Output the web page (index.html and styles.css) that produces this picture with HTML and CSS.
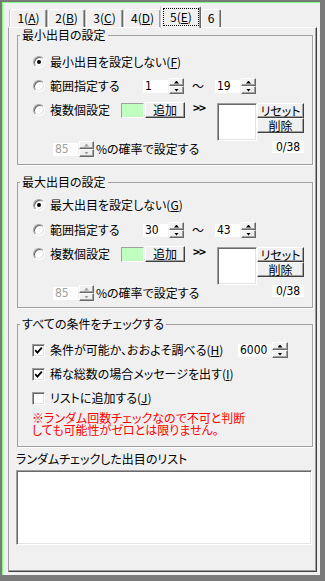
FILE: index.html
```html
<!DOCTYPE html>
<html lang="ja">
<head>
<meta charset="utf-8">
<title>設定</title>
<link rel="stylesheet" href="styles.css">
</head>
<body>
<div class="window">
  <div class="tabs">
    <div class="tab">1(<u>A</u>)</div>
    <div class="tab">2(<u>B</u>)</div>
    <div class="tab">3(<u>C</u>)</div>
    <div class="tab">4(<u>D</u>)</div>
    <div class="tab active"><span class="focus">5(<u>E</u>)</span></div>
    <div class="tab narrow">6</div>
  </div>
  <div class="panel">
    <fieldset class="group g1">
      <legend>最小出目の設定</legend>
      <div class="gbody">
        <div class="row">
          <div class="opt"><span class="radio on"></span><span>最小出目を設定しない(<u>F</u>)</span></div>
        </div>
        <div class="row range">
          <div class="opt w-range"><span class="radio"></span><span>範囲指定する</span></div>
          <div class="spin"><span class="field">1</span><span class="arrows"><span class="ab"><i class="up"></i></span><span class="ab"><i class="dn"></i></span></span></div>
          <span class="tilde">～</span>
          <div class="spin"><span class="field">19</span><span class="arrows"><span class="ab"><i class="up"></i></span><span class="ab"><i class="dn"></i></span></span></div>
        </div>
        <div class="multi">
          <div class="optline">
            <div class="opt w-multi"><span class="radio"></span><span>複数個設定</span></div>
            <span class="swatch"></span>
            <span class="btn add">追加</span>
            <span class="chev">&gt;&gt;</span>
          </div>
          <div class="minilist"></div>
          <div class="btncol">
            <span class="btn">リセット</span>
            <span class="btn">削除</span>
          </div>
          <div class="prob">
            <div class="spin disabled"><span class="field">85</span><span class="arrows"><span class="ab"><i class="up"></i></span><span class="ab"><i class="dn"></i></span></span></div>
            <span>%の確率で設定する</span>
          </div>
          <span class="count">0/38</span>
        </div>
      </div>
    </fieldset>

    <fieldset class="group g2">
      <legend>最大出目の設定</legend>
      <div class="gbody">
        <div class="row">
          <div class="opt"><span class="radio on"></span><span>最大出目を設定しない(<u>G</u>)</span></div>
        </div>
        <div class="row range">
          <div class="opt w-range"><span class="radio"></span><span>範囲指定する</span></div>
          <div class="spin"><span class="field">30</span><span class="arrows"><span class="ab"><i class="up"></i></span><span class="ab"><i class="dn"></i></span></span></div>
          <span class="tilde">～</span>
          <div class="spin"><span class="field">43</span><span class="arrows"><span class="ab"><i class="up"></i></span><span class="ab"><i class="dn"></i></span></span></div>
        </div>
        <div class="multi">
          <div class="optline">
            <div class="opt w-multi"><span class="radio"></span><span>複数個設定</span></div>
            <span class="swatch"></span>
            <span class="btn add">追加</span>
            <span class="chev">&gt;&gt;</span>
          </div>
          <div class="minilist"></div>
          <div class="btncol">
            <span class="btn">リセット</span>
            <span class="btn">削除</span>
          </div>
          <div class="prob">
            <div class="spin disabled"><span class="field">85</span><span class="arrows"><span class="ab"><i class="up"></i></span><span class="ab"><i class="dn"></i></span></span></div>
            <span>%の確率で設定する</span>
          </div>
          <span class="count">0/38</span>
        </div>
      </div>
    </fieldset>

    <fieldset class="group g3">
      <legend>すべての条件をチェックする</legend>
      <div class="gbody">
        <div class="row">
          <div class="opt w-check"><span class="check"><svg width="9" height="9" viewBox="0 0 9 9"><polyline points="1.2,4.2 3.4,6.6 7.8,1.6" fill="none" stroke="#000" stroke-width="1.8"/></svg></span><span>条件が可能か、おおよそ調べる(<u>H</u>)</span></div>
          <div class="spin wide"><span class="field">6000</span><span class="arrows"><span class="ab"><i class="up"></i></span><span class="ab"><i class="dn"></i></span></span></div>
        </div>
        <div class="row gap8">
          <div class="opt"><span class="check"><svg width="9" height="9" viewBox="0 0 9 9"><polyline points="1.2,4.2 3.4,6.6 7.8,1.6" fill="none" stroke="#000" stroke-width="1.8"/></svg></span><span>稀な総数の場合メッセージを出す(<u>I</u>)</span></div>
        </div>
        <div class="row gap8">
          <div class="opt"><span class="check"></span><span>リストに追加する(<u>J</u>)</span></div>
        </div>
        <p class="note"><span class="nl">※ランダム回数チェックなので不可と判断</span><span class="nl">しても可能性がゼロとは限りません。</span></p>
      </div>
    </fieldset>

    <div class="listlabel">ランダムチェックした出目のリスト</div>
    <div class="biglist"></div>
  </div>
</div>
</body>
</html>
```

FILE: styles.css
```css
* { box-sizing: border-box; }
html, body { margin: 0; padding: 0; }
body {
  width: 325px;
  height: 581px;
  overflow: hidden;
  background: #7a7a7a;
  font-family: "Noto Sans CJK JP", sans-serif;
  font-size: 12px;
  line-height: 14px;
  color: #000;
  font-feature-settings: "palt" 1;
}
u { text-decoration: underline; text-underline-offset: 1px; }

.window {
  margin: 2px 0 0 2px;
  width: 318px;
  height: 573px;
  border-top: 1px solid #80ff80;
  border-left: 1px solid #80ff80;
  background: #f0f0f0;
  padding: 3px 0 0 5px;
}

/* tabs */
.tabs {
  display: flex;
  align-items: flex-end;
  height: 21px;
  padding-left: 2px;
}
.tab {
  width: 37px;
  height: 18px;
  margin-right: 1px;
  border: 1px solid #fff;
  border-bottom: 0;
  border-right-color: #696969;
  box-shadow: inset -1px 0 #a0a0a0, -1px 0 #c8c8c8;
  border-radius: 2px 2px 0 0;
  text-align: center;
  line-height: 16px;
  background: #f0f0f0;
}
.tab.active {
  width: 40px;
  height: 22px;
  margin: 0 0 -1px -1px;
  position: relative;
  z-index: 1;
  padding: 1px 1px 0 1px;
}
.tab.narrow { width: 20px; }
.focus {
  display: block;
  height: 18px;
  outline: 1px dotted #000;
  outline-offset: -1px;
  line-height: 17px;
}

/* panel */
.panel {
  width: 309px;
  height: 545px;
  border-top: 1px solid #fff;
  border-left: 1px solid #a0a0a0;
  border-right: 1px solid #404040;
  border-bottom: 1px solid #404040;
  box-shadow: inset -1px -1px #a0a0a0;
}

/* group boxes */
.group {
  margin: 0 0 0 8px;
  width: 296px;
  min-width: 0;
  padding: 0;
  border: 1px solid #a0a0a0;
  box-shadow: 1px 1px #fff;
}
.group legend {
  padding: 0 2px;
  margin-left: 2px;
  line-height: 14px;
}
.gbody { padding-left: 15px; }
.g1 .gbody { padding-top: 12px; padding-bottom: 7px; }
.g2 { margin-top: 10px; }
.g2 .gbody { padding-top: 8px; padding-bottom: 6px; }
.g3 { margin-top: 9px; }
.g3 .gbody { padding: 11px 0 10px 14px; }

.row {
  display: flex;
  align-items: center;
  height: 16px;
}
.row.range { margin-top: 8px; }
.g2 .row.range { margin-top: 9px; }
.row.gap8 { margin-top: 8px; }

.opt {
  display: flex;
  align-items: center;
  gap: 5px;
  white-space: nowrap;
}
.w-range { width: 110px; }
.w-multi { width: 88px; }
.w-check { width: 206px; }

.radio {
  flex: none;
  position: relative;
  width: 12px;
  height: 12px;
  border-radius: 50%;
  background: #fff;
  border: 1px solid;
  border-color: #a0a0a0 #fff #fff #a0a0a0;
  box-shadow: inset 1px 1px #696969, inset -1px -1px #e3e3e3;
}
.radio.on::after {
  content: "";
  position: absolute;
  left: 3px;
  top: 3px;
  width: 4px;
  height: 4px;
  border-radius: 50%;
  background: #000;
}

.check {
  flex: none;
  width: 13px;
  height: 13px;
  background: #fff;
  border: 1px solid;
  border-color: #a0a0a0 #fff #fff #a0a0a0;
  box-shadow: inset 1px 1px #696969, inset -1px -1px #e3e3e3;
  display: flex;
  align-items: center;
  justify-content: center;
}
.check svg { display: block; }

/* spin edit */
.spin {
  display: flex;
  align-items: center;
  gap: 1px;
  height: 16px;
}
.field {
  width: 25px;
  height: 13px;
  background: #fff;
  padding-left: 2px;
  font-family: "Liberation Sans Narrow", "DejaVu Sans Condensed", sans-serif;
  font-size: 12px;
  line-height: 13px;
}
.spin.wide .field { width: 33px; }
.arrows {
  display: flex;
  flex-direction: column;
  width: 15px;
  height: 16px;
}
.spin.wide .arrows { width: 16px; }
.ab {
  height: 8px;
  display: flex;
  align-items: center;
  justify-content: center;
  background: #f0f0f0;
  border: 1px solid;
  border-color: #fff #696969 #696969 #fff;
  box-shadow: inset -1px -1px #a0a0a0;
}
.ab i {
  display: block;
  width: 5px;
  height: 3px;
  background: #000;
}
.ab i.up { clip-path: polygon(50% 0, 100% 100%, 0 100%); }
.ab i.dn { clip-path: polygon(0 0, 100% 0, 50% 100%); }
.disabled .field { color: #a0a0a0; }
.disabled .ab i { background: #a0a0a0; }

.tilde { margin: 0 11px 0 8px; width: 12px; text-align: center; }

/* multi block */
.multi {
  margin-top: 8px;
  display: grid;
  grid-template-columns: 184px 40px 47px;
  grid-template-rows: 39px 16px;
}
.optline {
  grid-area: 1 / 1;
  display: flex;
  align-items: center;
  height: 16px;
}
.swatch {
  width: 23px;
  height: 15px;
  margin-top: 1px;
  background: #c0ffc0;
  border: 1px solid;
  border-color: #a0a0a0 #fff #fff #a0a0a0;
}
.btn {
  display: block;
  overflow: hidden;
  background: #f0f0f0;
  border: 1px solid;
  border-color: #fff #404040 #404040 #fff;
  box-shadow: inset -1px -1px #a0a0a0;
  text-align: center;
  line-height: 13px;
  white-space: nowrap;
}
.btn.add {
  width: 40px;
  height: 16px;
  margin-left: 1px;
  line-height: 14px;
}
.chev {
  margin-left: 8px;
  font-weight: bold;
  letter-spacing: -1px;
  align-self: flex-start;
  line-height: 12px;
}
.minilist {
  grid-area: 1 / 2;
  margin-top: 1px;
  height: 38px;
  background: #fff;
  border: 1px solid;
  border-color: #a0a0a0 #fff #fff #a0a0a0;
  box-shadow: inset 1px 1px #696969, inset -1px -1px #e3e3e3;
}
.btncol {
  grid-area: 1 / 3;
  margin-top: 1px;
  display: flex;
  flex-direction: column;
}
.btncol .btn { height: 15px; }
.prob {
  grid-area: 2 / 1;
  display: flex;
  align-items: center;
  gap: 2px;
  padding-left: 20px;
  white-space: nowrap;
}
.count {
  grid-area: 2 / 3;
  justify-self: end;
  align-self: start;
  width: 32px;
  height: 12px;
  background: #fff;
  text-align: center;
  font-family: "Liberation Sans Narrow", "DejaVu Sans Condensed", sans-serif;
  line-height: 12px;
}

.note {
  margin: 6px 0 0;
  color: #f00;
  white-space: nowrap;
}
.nl {
  display: block;
  height: 12px;
  line-height: 12px;
}

.listlabel {
  margin: 5px 0 0 7px;
  line-height: 14px;
}
.biglist {
  margin: 4px 0 0 7px;
  width: 296px;
  height: 75px;
  background: #fff;
  border: 1px solid;
  border-color: #a0a0a0 #fff #fff #a0a0a0;
  box-shadow: inset 1px 1px #696969, inset -1px -1px #e3e3e3;
}
```
